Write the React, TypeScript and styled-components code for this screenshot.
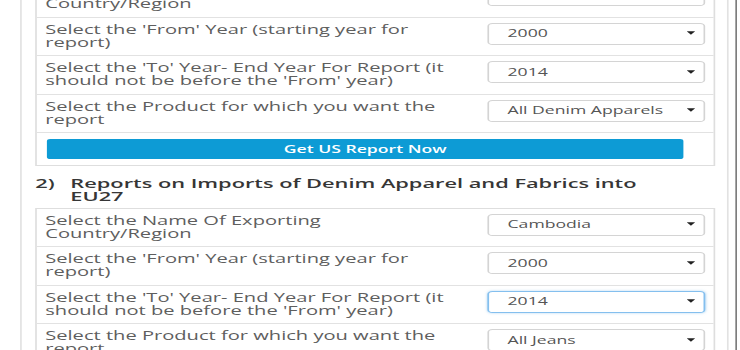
import React from "react";
import styled, { createGlobalStyle } from "styled-components";

type Row = { label: string; value: string; focused?: boolean };

const usRows: Row[] = [
  { label: "Select the Name Of Exporting Country/Region", value: "Cambodia" },
  { label: "Select the 'From' Year (starting year for report)", value: "2000" },
  { label: "Select the 'To' Year- End Year For Report (it should not be before the 'From' year)", value: "2014" },
  { label: "Select the Product for which you want the report", value: "All Denim Apparels" },
];

const euRows: Row[] = [
  { label: "Select the Name Of Exporting Country/Region", value: "Cambodia" },
  { label: "Select the 'From' Year (starting year for report)", value: "2000" },
  { label: "Select the 'To' Year- End Year For Report (it should not be before the 'From' year)", value: "2014", focused: true },
  { label: "Select the Product for which you want the report", value: "All Jeans" },
];

const Caret = () => (
  <svg width="5" height="4" viewBox="0 0 10 7">
    <path d="M0 0 L10 0 L5 7 Z" fill="#222" />
  </svg>
);

const FormRows: React.FC<{ rows: Row[] }> = ({ rows }) => (
  <>
    {rows.map((r, i) => (
      <FormRow key={i}>
        <Label>{r.label}</Label>
        <SelectBox $focused={r.focused}>
          <span>{r.value}</span>
          <Caret />
        </SelectBox>
      </FormRow>
    ))}
  </>
);

const App: React.FC = () => {
  return (
    <>
      <GlobalStyle />
      <Stage>
        <Panel>
          <ReportTable $first>
            <FormRows rows={usRows} />
            <ButtonRow>
              <SubmitButton type="button">Get US Report Now</SubmitButton>
            </ButtonRow>
          </ReportTable>

          <SectionTitle>
            <span className="num">2)</span>
            <span>Reports on Imports of Denim Apparel and Fabrics into EU27</span>
          </SectionTitle>

          <ReportTable>
            <FormRows rows={euRows} />
            <ButtonRow>
              <SubmitButton type="button">Get EU27 Report Now</SubmitButton>
            </ButtonRow>
          </ReportTable>
        </Panel>
      </Stage>
    </>
  );
};

export default App;

/* ================= styled ================= */

const GlobalStyle = createGlobalStyle`
  html, body {
    margin: 0;
    padding: 0;
    background: #fff;
    overflow: hidden;
  }
  body {
    font-family: "Open Sans", "Liberation Sans", sans-serif;
  }
`;

// the screenshot is a horizontally stretched capture of a narrow page
const Stage = styled.div`
  width: 439px;
  height: 350px;
  display: flex;
  border-right: 1.5px solid #7d7d7d;
  transform: scaleX(1.675);
  transform-origin: 0 0;
  overflow: hidden;
`;

const Panel = styled.div`
  margin-left: 12px;
  width: 423px;
  box-sizing: border-box;
  padding: 0 7px 0 8px;
  border-left: 1px solid #e2e2e2;
  border-right: 1px solid #e2e2e2;
`;

const ReportTable = styled.div<{ $first?: boolean }>`
  margin-top: ${(p) => (p.$first ? "-22px" : "0")};
  border: 1px solid #dedede;
  display: flex;
  flex-direction: column;
`;

const FormRow = styled.div`
  display: grid;
  grid-template-columns: 1fr 130px;
  column-gap: 14px;
  align-items: start;
  padding: 5px 5px 6.5px 5px;
  border-top: 1px solid #e2e2e2;

  &:first-child {
    border-top: none;
  }
`;

const Label = styled.div`
  font-size: 12px;
  line-height: 13px;
  height: 26px;
  color: #5e5e5e;
`;

const SelectBox = styled.div<{ $focused?: boolean }>`
  height: 22px;
  box-sizing: border-box;
  display: flex;
  align-items: center;
  justify-content: space-between;
  padding: 0 5px 1px 11px;
  border: 1px solid ${(p) => (p.$focused ? "#84bfee" : "#d4d4d4")};
  box-shadow: ${(p) => (p.$focused ? "0 0 2px rgba(102, 175, 233, 0.5)" : "none")};
  border-radius: 3px;
  background: #fff;
  font-size: 10.5px;
  color: #555;

  svg {
    display: block;
  }
`;

const ButtonRow = styled.div`
  border-top: 1px solid #e2e2e2;
  padding: 6px 18px 6px 6px;
`;

const SubmitButton = styled.button`
  display: block;
  width: 100%;
  height: 20px;
  padding: 0;
  border: none;
  border-radius: 2px;
  background: #0d9bd5;
  color: #fff;
  font-family: "Open Sans", "Liberation Sans", sans-serif;
  font-size: 10.5px;
  font-weight: 600;
  cursor: pointer;
`;

const SectionTitle = styled.div`
  display: flex;
  margin: 11.4px 0 5.6px;
  padding-right: 30px;
  font-size: 13px;
  line-height: 12.5px;
  font-weight: 600;
  color: #363636;

  .num {
    flex: 0 0 21px;
  }
`;
